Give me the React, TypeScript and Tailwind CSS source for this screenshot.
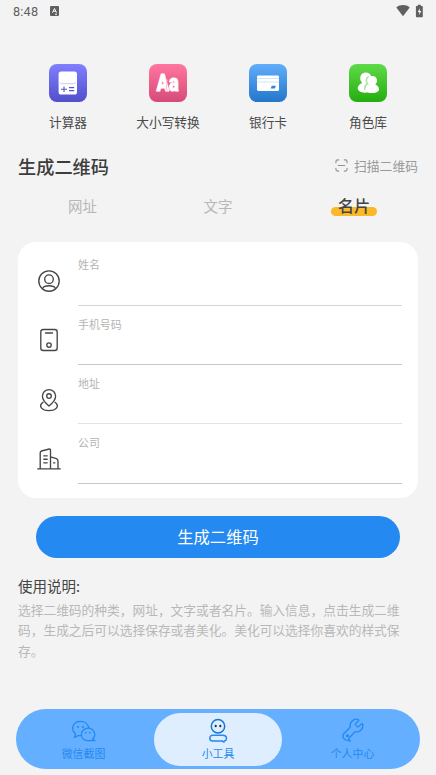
import type { ReactNode } from 'react';

function Tile({ label, tone, children }: { label: string; tone: string; children: ReactNode }) {
  return (
    <div className="flex w-[100px] flex-col items-center">
      <div className={`h-[38px] w-[38px] rounded-[8px] bg-linear-to-b ${tone}`}>
        <svg viewBox="0 0 38 38" className="h-full w-full">{children}</svg>
      </div>
      <div className="mt-[10px] text-[12.7px] leading-5 text-[#4a4a4a]">{label}</div>
    </div>
  );
}

function Field({ label, line, children }: { label: string; line: string; children: ReactNode }) {
  return (
    <div className="flex h-[59.4px]">
      <svg viewBox="0 0 24 24" fill="none" stroke="#464646" strokeWidth="1.35" strokeLinecap="round" strokeLinejoin="round" className="mt-[22.5px] mr-[17px] h-6 w-6 shrink-0">
        {children}
      </svg>
      <div className={`h-full flex-1 border-b pt-[10px] text-[10.9px] leading-4 text-[#b4b4b4] ${line}`}>{label}</div>
    </div>
  );
}

export default function App() {
  return (
    <div className="flex h-[775px] w-[436px] flex-col overflow-hidden bg-[#f3f3f3] font-['Noto_Sans_CJK_SC',sans-serif]">
      <div className="flex h-[22px] items-center pr-3 pl-[13px]">
        <span className="pt-px font-[Roboto,sans-serif] text-[12.7px] leading-4 tracking-[0.2px] text-[#606060]">8:48</span>
        <svg viewBox="0 0 9 10" className="ml-[11.5px] h-[10px] w-[9px]">
          <rect width="9" height="10" rx="1" fill="#606060" />
          <path d="M2.5 6.7 4.5 2.5l2 4.2M3.3 5.3h2.4M5 8.3h2" fill="none" stroke="#fff" strokeWidth="1" />
        </svg>
        <svg viewBox="0 0 28 14" className="ml-auto h-[14px] w-7">
          <path d="M0.3 3.5C4 .3 10 .3 13.7 3.5L7 12.3z" fill="#606060" />
          <path d="M21.8.8h3v1.1h1.3q.7 0 .7.7v10q0 .7-.7.7h-5.5q-.7 0-.7-.7v-10q0-.7.7-.7h1.2z" fill="#606060" />
          <path d="M24 4.2 21.8 8h1.5v3L25.2 7h-1.5z" fill="#fff" />
        </svg>
      </div>

      <div className="mt-[41.5px] flex justify-center">
        <Tile label="计算器" tone="from-[#817fff] to-[#514fca]">
          <rect x="9.6" y="7.5" width="18.4" height="23" rx="2.6" fill="#fff" />
          <path d="M11.5 18.5q0 1.2 1.2 1.2h12.2q1.2 0 1.2-1.2" stroke="#c9c9f4" strokeWidth="1" fill="none" />
          <path d="M12 25.2h6M15 22.5v5.4M20 23.6h5.2M20 26.6h5.2" stroke="#5654d2" strokeWidth="1.1" />
        </Tile>
        <Tile label="大小写转换" tone="from-[#ff76a1] to-[#d64a77]">
          <text x="7.6" y="27.2" fontFamily="Roboto, sans-serif" fontWeight="900" fontSize="24" fill="#fff" stroke="#fff" strokeWidth=".9" strokeLinejoin="round" textLength="22.3" lengthAdjust="spacingAndGlyphs">Aa</text>
          <path d="M18.8 15.5c-1.6 2-1.2 3.2-.6 4.2-1.3 1.8-1.2 4.5 0 7" fill="none" stroke="#ffb3cb" strokeWidth=".9" />
        </Tile>
        <Tile label="银行卡" tone="from-[#60adfb] to-[#2277cb]">
          <rect x="8" y="11.5" width="22" height="15.5" rx="1.4" fill="#fff" />
          <path d="M8 14.5h22M8 18h22" stroke="#c5def8" strokeWidth=".8" />
          <path d="M22.8 21.7h4.2l-1.2 2.8h-4.2z" fill="#3585d8" />
        </Tile>
        <Tile label="角色库" tone="from-[#5eda45] to-[#22ad0a]">
          <path d="M17 8.5c4.4 0 6 3.8 5 7.5-.4 1.6-1.2 2.5-2 3.2v8.6c-4 2-11.3.8-11.3-3.7 0-2.6 2.3-4.4 4.5-5.2-1.5-1.5-2.1-3.3-2-5 .2-3.2 2.5-5.4 5.8-5.4z" fill="#fff" />
          <path d="M19.6 12.5c-2.3 1.2-3 4.7-1.2 7.2-2.3 1.5-3 3.8-2.3 6.3" fill="none" stroke="#b0e3a8" strokeWidth="1.7" />
          <path d="M23.3 12c3.2 0 4.9 2.3 4.7 4.9-.1 1.4-.8 2.6-1.8 3.5 2 .8 3.8 2.2 3.8 4.8 0 5-13.5 5.3-13.5.2 0-2.8 2-4.1 4-5-1.3-1-1.9-2.1-1.9-3.4 0-2.8 1.7-5 4.7-5z" fill="#fff" />
        </Tile>
      </div>

      <div className="mt-[20px] flex h-7 items-center px-[18px]">
        <h1 className="text-[18.2px] leading-7 font-medium text-[#3c3c3c]">生成二维码</h1>
        <svg viewBox="0 0 14 14" fill="none" stroke="#929292" strokeWidth="1.25" strokeLinecap="round" className="ml-auto h-[13px] w-[13px]">
          <path d="M1 4V3q0-2 2-2h1M10 1h1q2 0 2 2v1M1 10v1q0 2 2 2h1M10 13h1q2 0 2-2v-1M3.5 7h7" />
        </svg>
        <span className="ml-[6px] pt-px text-[12.8px] leading-5 text-[#999]">扫描二维码</span>
      </div>

      <div className="mt-[12px] flex h-7 items-center px-[14px] text-[14.5px] text-[#b7b7b7]">
        <div className="w-[136px] pl-px text-center">网址</div>
        <div className="w-[136px] text-center">文字</div>
        <div className="flex w-[136px] justify-center">
          <div className="relative h-7 w-[46px] text-center text-[16.3px] leading-[26px] font-medium text-[#444]">
            <div className="absolute top-[15.5px] left-0 h-[9px] w-[46px] rounded-full bg-[#f9b928]" />
            <span className="relative">名片</span>
          </div>
        </div>
      </div>

      <div className="mx-[18px] mt-[22.5px] h-[256px] rounded-[18px] bg-white pt-[4.3px] pr-4 pl-[19px]">
        <Field label="姓名" line="border-[#d5d5d5]">
          <circle cx="12" cy="12" r="10.2" />
          <circle cx="12" cy="10.2" r="4.3" />
          <path d="M5.8 19c1.5-3 10.9-3 12.4 0" />
        </Field>
        <Field label="手机号码" line="border-[#c9c9c9]">
          <rect x="3.8" y="1.5" width="16.4" height="21" rx="2.5" />
          <path d="M8.5 5h7" />
          <circle cx="12" cy="17" r="2.2" />
        </Field>
        <Field label="地址" line="border-[#e3e3e3]">
          <path d="M12 18c-2.7-2.3-6.6-5.8-6.6-9.8a6.6 6.6 0 0 1 13.2 0c0 4-3.9 7.5-6.6 9.8z" />
          <circle cx="12" cy="8" r="2.3" />
          <path d="M6 14.2c-5 3.8-1.3 8.4 6 8.4s11-4.6 6-8.4" />
        </Field>
        <Field label="公司" line="border-[#c2c7c9]">
          <path d="M.7 21.8h22.6M3.2 21.7V5.8q0-1.4 1.3-1.8l7.8-2q1.2-.2 1.2 1v18.7M13.7 9.8l5.7 1.9q1.6.7 1.6 2.2v7.8M6.8 8.8h3.4M6.8 12.2h3.4M6.8 15.8h3.4M16.5 15.8h1.4" />
        </Field>
      </div>

      <button className="mx-9 mt-[18px] h-[41.5px] shrink-0 rounded-full bg-[#2489f0] pb-[2px] text-[16.3px] leading-6 text-white">生成二维码</button>

      <div className="mt-[16.5px] px-[18px]">
        <h2 className="text-[14.5px] leading-6 text-[#444]">使用说明:</h2>
        <p className="mt-[1.5px] text-[12.72px] leading-[20.7px] text-[#b8b8b8]">
          选择二维码的种类，网址，文字或者名片。输入信息，点击生成二维<br />码，生成之后可以选择保存或者美化。美化可以选择你喜欢的样式保<br />存。
        </p>
      </div>

      <nav className="mx-4 mt-auto mb-[6px] flex h-[60px] shrink-0 items-center rounded-full bg-[#64afff] px-[3px] text-[10.9px] leading-4 text-[#2489f0]">
        <div className="flex h-[53px] w-[129px] flex-col items-center pt-[5px]">
          <svg viewBox="0 0 26 26" fill="none" stroke="#2489f0" strokeWidth="1.3" strokeLinecap="round" strokeLinejoin="round" className="h-[26px] w-[26px]">
            <path d="M10.5 17.7H7l-3.5 1.8 1-3.7C-1 11.5 2 3.3 9.5 3.3c4.4 0 7.5 2.8 8.2 6.3M24 22.7H16.5C12.8 22.5 10.4 19.8 10.4 16.5c0-3.7 3-6.3 6.5-6.3 6.8 0 8.8 7.7 4.6 11z" />
            <path d="M7 8.7v.5M12 8.7v.5M14.7 14.6v.1M18.8 14.6v.1" strokeWidth="1.7" />
          </svg>
          <span className="mt-px">微信截图</span>
        </div>
        <div className="ml-[6px] flex h-[53px] w-[128px] flex-col items-center rounded-full bg-[#dfeeff] pt-[5px]">
          <svg viewBox="0 0 26 26" fill="none" stroke="#2489f0" strokeWidth="1.5" strokeLinecap="round" strokeLinejoin="round" className="h-[26px] w-[26px]">
            <circle cx="13" cy="8.2" r="6.7" stroke="#1673ce" />
            <path d="M10.7 7.8v.5M15.3 7.8v.5" stroke="#103451" strokeWidth="2.1" />
            <path d="M19 24 17.3 23H7.7C4 23 3.7 17.3 7.7 17.3h10c4.8 0 4.5 5.2 2 5.4" />
          </svg>
          <span className="mt-px">小工具</span>
        </div>
        <div className="ml-[6px] flex h-[53px] w-[129px] flex-col items-center pt-[5px]">
          <svg viewBox="0 0 26 26" fill="none" stroke="#2489f0" strokeWidth="1.3" strokeLinecap="round" strokeLinejoin="round" className="-mt-[0.5px] mb-[0.5px] h-[26px] w-[26px]">
            <path d="M10.5 24.2 8 23.3C3.5 23.3 1.4 19.5 4 16.5l6.2-6.3C9.5 5.5 13.3 1 18.3 2.5q1 .4.2 1.2l-2.7 2.7q-.8.8 0 1.7l1.3 1.3q1 .9 1.9 0l2.5-2.5q.9-.7 1.2.3c1 5-3.2 8.5-7.8 7.6l-5.2 5.7q-1.7 1.2 0 3" />
            <circle cx="7.5" cy="18.7" r=".9" fill="#2489f0" />
          </svg>
          <span className="mt-px">个人中心</span>
        </div>
      </nav>
    </div>
  );
}
